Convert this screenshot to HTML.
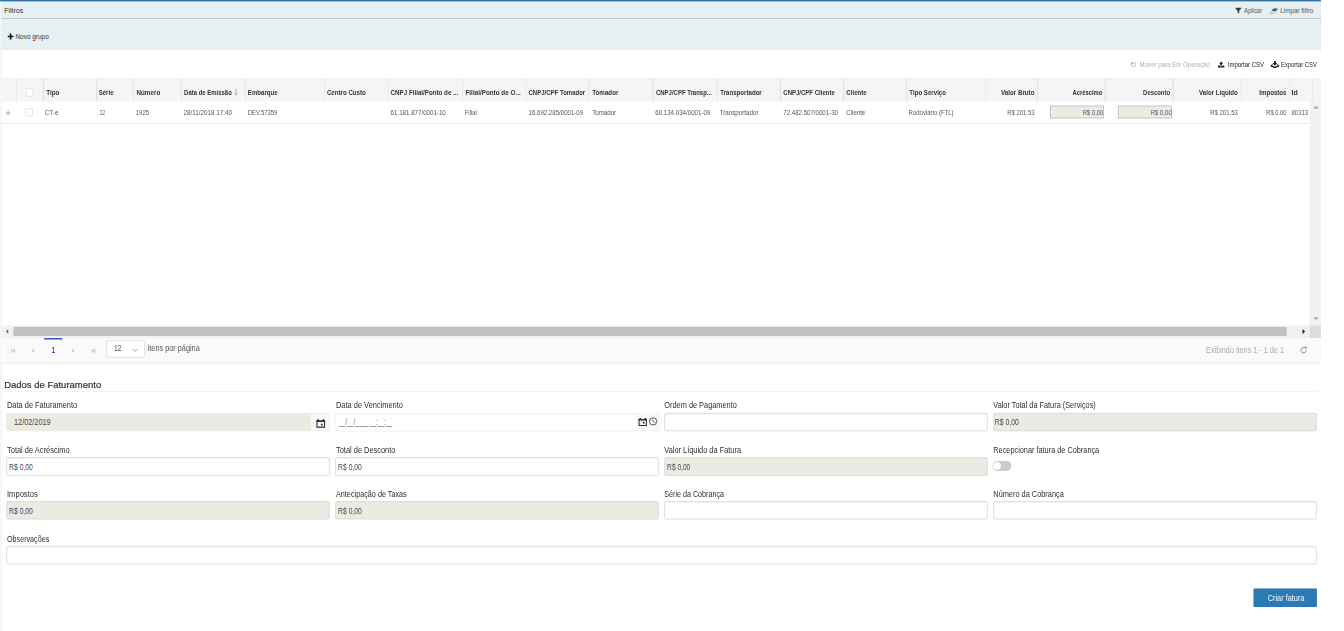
<!DOCTYPE html>
<html lang="pt-BR"><head><meta charset="utf-8"><title>Faturamento</title>
<style>
html,body{margin:0;padding:0;background:#fff;}
body{width:1344px;height:631px;position:relative;overflow:hidden;font-family:"Liberation Sans",Arial,sans-serif;font-size:11px;color:#333;}
#pg{position:absolute;left:0;top:0;width:1920px;height:902px;transform:scale(0.7);transform-origin:0 0;}
.t{position:absolute;white-space:nowrap;line-height:17.140px;height:17.140px;transform-origin:0 50%;}
.b{position:absolute;box-sizing:border-box;}
.in{border:1px solid #cfcfcf;border-radius:2px;background:#fff;box-shadow:inset 0 1px 1px rgba(0,0,0,.075);}
.dis{background:#ebebe4;border:1px solid #d1d1cb;border-radius:2.500px;}
svg{position:absolute;overflow:visible;}
</style></head><body><div id="pg">

<div class="b" style="left:0.00px;top:0.00px;width:6.00px;height:902.86px;background:linear-gradient(to right,#f1f1f1,#fbfbfb 35%,#fff);"></div>
<div class="b" style="left:2.14px;top:0.00px;width:1884.86px;height:70.86px;background:#e4f0f2;border-right:1.400px solid #dce9ec;border-bottom:1px solid #dfecef;"></div>
<div class="b" style="left:0.00px;top:0.00px;width:1887.00px;height:1.86px;background:#2f73a5;"></div>
<div class="b" style="left:2.14px;top:25.57px;width:1884.86px;height:1.43px;background:#a9b6bb;"></div>
<span class="t" style="left:6.29px;top:6.90px;font-size:11.00px;color:#333;transform:scaleX(0.9072);">Filtros</span>
<svg style="left:11.00px;top:47.86px" width="8.29" height="8.29" viewBox="0 0 10 10"><path d="M3.600 0h2.800v3.600H10v2.800H6.400V10H3.600V6.400H0V3.600h3.600z" fill="#111"/></svg>
<span class="t" style="left:22.29px;top:44.00px;font-size:10.71px;color:#333;transform:scaleX(0.8614);">Novo grupo</span>
<svg style="left:1765.29px;top:11.43px" width="8.29" height="8.43" viewBox="0 0 10 10"><path d="M0 0h10v1.200L6.400 5.200V10L3.600 8.300V5.200L0 1.200z" fill="#3a3a3a"/></svg>
<span class="t" style="left:1777.29px;top:6.86px;font-size:10.71px;color:#555;transform:scaleX(0.7987);">Aplicar</span>
<svg style="left:1814.00px;top:11.57px" width="11.71" height="7.86" viewBox="0 0 115 77"><path d="M50 0H115L90 38H25z" fill="#555"/><path d="M27 38H88L64 72H5z" fill="none" stroke="#888" stroke-width="7"/></svg>
<span class="t" style="left:1828.71px;top:6.86px;font-size:10.71px;color:#555;transform:scaleX(0.8421);">Limpar filtro</span>
<svg style="left:1615.14px;top:88.00px" width="8.29" height="7.29" viewBox="0 0 11 10"><path d="M1.500 3.500V9h7.500V1" fill="none" stroke="#b5b5b5" stroke-width="1.500"/><path d="M0.500 2.800L3 0.300v1.500h4v2H3v1.500z" fill="#999"/></svg>
<span class="t" style="left:1628.14px;top:83.86px;font-size:10.71px;color:#b0b0b0;transform:scaleX(0.8147);">Mover para Em Operação</span>
<svg style="left:1740.29px;top:87.57px" width="9.14" height="8.29" viewBox="0 0 12 11"><path d="M6 0L9.800 4.200H7.600V7.600H4.400V4.200H2.200z" fill="#1a1a1a"/><path d="M0 7.300h3.200l0.900 1.300h3.800l0.900-1.300H12V11H0z" fill="#1a1a1a"/></svg>
<span class="t" style="left:1754.29px;top:83.86px;font-size:10.71px;color:#222;transform:scaleX(0.7971);">Importar CSV</span>
<svg style="left:1814.57px;top:86.86px" width="12.57" height="10.71" viewBox="0 0 15 12.500"><path d="M6 0h3v3.500h2.600L7.500 8 3.400 3.500H6z" fill="#1a1a1a"/><path d="M0.300 7.200L3 5.400l1.300 1.200-1.700 1L7.500 10l4.900-2.400-1.700-1L12 5.400l2.700 1.800V9.200L7.500 12.500 0.300 9.200z" fill="#1a1a1a"/></svg>
<span class="t" style="left:1830.43px;top:83.72px;font-size:10.71px;color:#222;transform:scaleX(0.7828);">Exportar CSV</span>
<div class="b" style="left:2.14px;top:112.00px;width:1884.86px;height:32.71px;background:#f5f5f5;border-top:1px solid #ececec;"></div>
<div class="b" style="left:22.71px;top:112.00px;width:1.43px;height:32.71px;background:#e3e3e3;"></div>
<div class="b" style="left:61.14px;top:112.00px;width:1.43px;height:32.71px;background:#e3e3e3;"></div>
<div class="b" style="left:137.43px;top:112.00px;width:1.43px;height:32.71px;background:#e3e3e3;"></div>
<div class="b" style="left:189.57px;top:112.00px;width:1.43px;height:32.71px;background:#e3e3e3;"></div>
<div class="b" style="left:258.57px;top:112.00px;width:1.43px;height:32.71px;background:#e3e3e3;"></div>
<div class="b" style="left:349.86px;top:112.00px;width:1.43px;height:32.71px;background:#e3e3e3;"></div>
<div class="b" style="left:462.86px;top:112.00px;width:1.43px;height:32.71px;background:#e3e3e3;"></div>
<div class="b" style="left:553.86px;top:112.00px;width:1.43px;height:32.71px;background:#e3e3e3;"></div>
<div class="b" style="left:660.00px;top:112.00px;width:1.43px;height:32.71px;background:#e3e3e3;"></div>
<div class="b" style="left:751.00px;top:112.00px;width:1.43px;height:32.71px;background:#e3e3e3;"></div>
<div class="b" style="left:841.00px;top:112.00px;width:1.43px;height:32.71px;background:#e3e3e3;"></div>
<div class="b" style="left:932.43px;top:112.00px;width:1.43px;height:32.71px;background:#e3e3e3;"></div>
<div class="b" style="left:1023.57px;top:112.00px;width:1.43px;height:32.71px;background:#e3e3e3;"></div>
<div class="b" style="left:1114.29px;top:112.00px;width:1.43px;height:32.71px;background:#e3e3e3;"></div>
<div class="b" style="left:1204.29px;top:112.00px;width:1.43px;height:32.71px;background:#e3e3e3;"></div>
<div class="b" style="left:1294.29px;top:112.00px;width:1.43px;height:32.71px;background:#e3e3e3;"></div>
<div class="b" style="left:1407.86px;top:112.00px;width:1.43px;height:32.71px;background:#e3e3e3;"></div>
<div class="b" style="left:1481.43px;top:112.00px;width:1.43px;height:32.71px;background:#e3e3e3;"></div>
<div class="b" style="left:1578.43px;top:112.00px;width:1.43px;height:32.71px;background:#e3e3e3;"></div>
<div class="b" style="left:1675.43px;top:112.00px;width:1.43px;height:32.71px;background:#e3e3e3;"></div>
<div class="b" style="left:1772.86px;top:112.00px;width:1.43px;height:32.71px;background:#e3e3e3;"></div>
<div class="b" style="left:1841.86px;top:112.00px;width:1.43px;height:32.71px;background:#e3e3e3;"></div>
<div class="b" style="left:1873.86px;top:112.00px;width:1.43px;height:32.71px;background:#e3e3e3;"></div>
<span class="t" style="left:65.71px;top:123.86px;font-size:10.71px;color:#333;transform:scaleX(0.8453);font-weight:bold;">Tipo</span>
<span class="t" style="left:141.29px;top:123.86px;font-size:10.71px;color:#333;transform:scaleX(0.8098);font-weight:bold;">Série</span>
<span class="t" style="left:194.64px;top:123.86px;font-size:10.71px;color:#333;transform:scaleX(0.8377);font-weight:bold;">Número</span>
<span class="t" style="left:262.50px;top:123.86px;font-size:10.71px;color:#333;transform:scaleX(0.7953);font-weight:bold;">Data de Emissão</span>
<span class="t" style="left:354.29px;top:123.86px;font-size:10.71px;color:#333;transform:scaleX(0.8180);font-weight:bold;">Embarque</span>
<span class="t" style="left:467.14px;top:123.86px;font-size:10.71px;color:#333;transform:scaleX(0.8208);font-weight:bold;">Centro Custo</span>
<span class="t" style="left:558.21px;top:123.86px;font-size:10.71px;color:#333;transform:scaleX(0.8295);font-weight:bold;">CNPJ Filial/Ponto de ...</span>
<span class="t" style="left:664.64px;top:123.86px;font-size:10.71px;color:#333;transform:scaleX(0.8443);font-weight:bold;">Filial/Ponto de O...</span>
<span class="t" style="left:755.36px;top:123.86px;font-size:10.71px;color:#333;transform:scaleX(0.8028);font-weight:bold;">CNPJ/CPF Tomador</span>
<span class="t" style="left:846.07px;top:123.86px;font-size:10.71px;color:#333;transform:scaleX(0.8323);font-weight:bold;">Tomador</span>
<span class="t" style="left:937.14px;top:123.86px;font-size:10.71px;color:#333;transform:scaleX(0.7999);font-weight:bold;">CNPJ/CPF Transp...</span>
<span class="t" style="left:1028.57px;top:123.86px;font-size:10.71px;color:#333;transform:scaleX(0.8161);font-weight:bold;">Transportador</span>
<span class="t" style="left:1119.29px;top:123.86px;font-size:10.71px;color:#333;transform:scaleX(0.8026);font-weight:bold;">CNPJ/CPF Cliente</span>
<span class="t" style="left:1209.29px;top:123.86px;font-size:10.71px;color:#333;transform:scaleX(0.8196);font-weight:bold;">Cliente</span>
<span class="t" style="left:1299.29px;top:123.86px;font-size:10.71px;color:#333;transform:scaleX(0.8187);font-weight:bold;">Tipo Serviço</span>
<span class="t" style="left:1429.71px;top:123.86px;font-size:10.71px;color:#333;transform:scaleX(0.8287);font-weight:bold;">Valor Bruto</span>
<span class="t" style="left:1531.71px;top:123.86px;font-size:10.71px;color:#333;transform:scaleX(0.7820);font-weight:bold;">Acréscimo</span>
<span class="t" style="left:1632.86px;top:123.86px;font-size:10.71px;color:#333;transform:scaleX(0.7903);font-weight:bold;">Desconto</span>
<span class="t" style="left:1713.21px;top:123.86px;font-size:10.71px;color:#333;transform:scaleX(0.8156);font-weight:bold;">Valor Líquido</span>
<span class="t" style="left:1798.57px;top:123.86px;font-size:10.71px;color:#333;transform:scaleX(0.8174);font-weight:bold;">Impostos</span>
<span class="t" style="left:1845.36px;top:123.86px;font-size:10.71px;color:#333;transform:scaleX(0.9363);font-weight:bold;">Id</span>
<svg style="left:335.00px;top:126.86px" width="4.29" height="9.29" viewBox="0 0 6 13"><path d="M3 0v12M0.500 9.500L3 12l2.500-2.500" fill="none" stroke="#888" stroke-width="1.300"/></svg>
<div class="b" style="left:37.29px;top:126.00px;width:10.93px;height:11.86px;background:#fff;border:1px solid #d8d8d8;border-radius:2px;"></div>
<div class="b" style="left:2.14px;top:175.86px;width:1869.29px;height:1.14px;background:#e2e2e2;"></div>
<div class="b" style="left:1871.43px;top:144.71px;width:15.57px;height:321.43px;background:#f1f1f1;"></div>
<svg style="left:1875.71px;top:150.71px" width="8.00" height="4.29" viewBox="0 0 10 5"><path d="M0 5L5 0l5 5z" fill="#a5a5a5"/></svg>
<svg style="left:1875.71px;top:453.29px" width="8.00" height="4.29" viewBox="0 0 10 5"><path d="M0 0L5 5l5-5z" fill="#a5a5a5"/></svg>
<svg style="left:8.00px;top:157.57px" width="7.14" height="7.14" viewBox="0 0 10 10"><path d="M4 0h2v4h4v2H6v4H4V6H0V4h4z" fill="#aaa"/></svg>
<div class="b" style="left:36.07px;top:154.86px;width:10.71px;height:11.57px;background:#fff;border:1px solid #d8d8d8;border-radius:2px;"></div>
<span class="t" style="left:64.29px;top:152.01px;font-size:9.86px;color:#555;transform:scaleX(0.9104);">CT-e</span>
<span class="t" style="left:141.79px;top:152.01px;font-size:9.86px;color:#555;transform:scaleX(0.7508);">12</span>
<span class="t" style="left:194.29px;top:152.01px;font-size:9.86px;color:#555;transform:scaleX(0.8631);">1925</span>
<span class="t" style="left:261.79px;top:152.01px;font-size:9.86px;color:#555;transform:scaleX(0.9164);">28/11/2018 17:40</span>
<span class="t" style="left:353.93px;top:152.01px;font-size:9.86px;color:#555;transform:scaleX(0.8508);">DEV.57359</span>
<span class="t" style="left:557.50px;top:152.01px;font-size:9.86px;color:#555;transform:scaleX(0.8942);">61.181.877/0001-10</span>
<span class="t" style="left:663.93px;top:152.01px;font-size:9.86px;color:#555;transform:scaleX(0.8463);">Filial</span>
<span class="t" style="left:755.36px;top:152.01px;font-size:9.86px;color:#555;transform:scaleX(0.8861);">16.692.285/0001-09</span>
<span class="t" style="left:845.71px;top:152.01px;font-size:9.86px;color:#555;transform:scaleX(0.8942);">Tomador</span>
<span class="t" style="left:936.43px;top:152.01px;font-size:9.86px;color:#555;transform:scaleX(0.8942);">60.134.034/0001-09</span>
<span class="t" style="left:1027.50px;top:152.01px;font-size:9.86px;color:#555;transform:scaleX(0.9051);">Transportador</span>
<span class="t" style="left:1118.57px;top:152.01px;font-size:9.86px;color:#555;transform:scaleX(0.8861);">72.482.507/0001-30</span>
<span class="t" style="left:1208.57px;top:152.01px;font-size:9.86px;color:#555;transform:scaleX(0.8840);">Cliente</span>
<span class="t" style="left:1298.21px;top:152.01px;font-size:9.86px;color:#555;transform:scaleX(0.8696);">Rodoviário (FTL)</span>
<span class="t" style="left:1438.86px;top:152.01px;font-size:9.86px;color:#555;transform:scaleX(0.8573);">R$ 201.53</span>
<span class="t" style="left:1729.29px;top:152.01px;font-size:9.86px;color:#555;transform:scaleX(0.8636);">R$ 201.53</span>
<span class="t" style="left:1808.93px;top:152.01px;font-size:9.86px;color:#555;transform:scaleX(0.8373);">R$ 0.00</span>
<span class="t" style="left:1845.29px;top:152.01px;font-size:9.86px;color:#555;transform:scaleX(0.8654);">80313</span>
<div class="b" style="left:1499.86px;top:150.57px;width:77.14px;height:18.29px;background:#ebebe4;border:1.400px solid #b2b2ae;box-shadow:inset 0 0 0 1.300px #f6f6f1;"></div>
<div class="b" style="left:1596.71px;top:150.57px;width:77.29px;height:18.29px;background:#ebebe4;border:1.400px solid #b2b2ae;box-shadow:inset 0 0 0 1.300px #f6f6f1;"></div>
<span class="t" style="left:1546.71px;top:152.01px;font-size:9.86px;color:#555;transform:scaleX(0.8477);">R$ 0,00</span>
<span class="t" style="left:1643.57px;top:152.01px;font-size:9.86px;color:#555;transform:scaleX(0.8683);">R$ 0,00</span>
<div class="b" style="left:2.14px;top:465.00px;width:1884.86px;height:18.00px;background:#f1f1f1;"></div>
<div class="b" style="left:19.00px;top:466.86px;width:1818.57px;height:12.86px;background:#c1c1c1;"></div>
<div class="b" style="left:1871.43px;top:465.00px;width:15.57px;height:18.00px;background:#dcdcdc;"></div>
<svg style="left:8.14px;top:470.00px" width="4.29" height="6.71" viewBox="0 0 5 10"><path d="M5 0L0 5l5 5z" fill="#6a6a6a"/></svg>
<svg style="left:1860.00px;top:469.57px" width="5.14" height="7.43" viewBox="0 0 5 10"><path d="M0 0l5 5-5 5z" fill="#222"/></svg>
<div class="b" style="left:2.14px;top:483.00px;width:1884.86px;height:36.29px;background:#fafafa;border-bottom:1px solid #e2e2e2;"></div>
<div class="b" style="left:63.14px;top:482.57px;width:26.14px;height:2.14px;background:#3343b5;"></div>
<span class="t" style="left:74.00px;top:491.91px;font-size:12.00px;color:#3f51b5;transform:scaleX(0.7293);font-weight:bold;">1</span>
<svg style="left:16.07px;top:497.71px" width="5.43" height="6.43" viewBox="0 0 8 10"><path d="M0 0h2v10H0zM8 0L2.500 5 8 10z" fill="#c8c8c8"/></svg>
<svg style="left:45.29px;top:497.71px" width="3.86" height="6.43" viewBox="0 0 5.500 10"><path d="M5.500 0L0 5l5.500 5z" fill="#c8c8c8"/></svg>
<svg style="left:103.29px;top:497.71px" width="3.86" height="6.43" viewBox="0 0 5.500 10"><path d="M0 0l5.500 5L0 10z" fill="#c8c8c8"/></svg>
<svg style="left:131.00px;top:497.71px" width="5.43" height="6.43" viewBox="0 0 8 10"><path d="M6 0H8v10H6zM0 0l5.500 5L0 10z" fill="#c8c8c8"/></svg>
<div class="b" style="left:152.00px;top:486.00px;width:54.71px;height:24.86px;background:#fff;border:1px solid #d4d4d4;border-radius:3px;"></div>
<span class="t" style="left:162.50px;top:489.16px;font-size:11.71px;color:#555;transform:scaleX(0.8240);">12</span>
<svg style="left:188.57px;top:497.71px" width="8.00" height="4.43" viewBox="0 0 10 5.500"><path d="M0.500 0.500L5 5l4.500-4.500" fill="none" stroke="#999" stroke-width="1.600"/></svg>
<span class="t" style="left:211.29px;top:489.16px;font-size:11.71px;color:#555;transform:scaleX(0.8924);">itens por página</span>
<span class="t" style="left:1723.29px;top:492.37px;font-size:11.71px;color:#aaa;transform:scaleX(0.8854);">Exibindo itens 1 - 1 de 1</span>
<svg style="left:1857.14px;top:495.43px" width="10.71" height="10.71" viewBox="0 0 12 12"><path d="M10.200 6A4.300 4.300 0 1 1 8.800 2.800" fill="none" stroke="#777" stroke-width="1.300"/><path d="M7.200 0.300h3.600v3.600z" fill="#777"/></svg>
<span class="t" style="left:6.43px;top:540.86px;font-size:14.00px;color:#333;transform:scaleX(0.9675);-webkit-text-stroke:0.3px #333;">Dados de Faturamento</span>
<div class="b" style="left:5.71px;top:558.86px;width:1875.00px;height:1.43px;background:#eee;"></div>
<span class="t" style="left:9.64px;top:569.87px;font-size:11.71px;color:#2e2e2e;transform:scaleX(0.9066);">Data de Faturamento</span>
<span class="t" style="left:479.57px;top:569.87px;font-size:11.71px;color:#2e2e2e;transform:scaleX(0.9074);">Data de Vencimento</span>
<span class="t" style="left:949.14px;top:569.87px;font-size:11.71px;color:#2e2e2e;transform:scaleX(0.8998);">Ordem de Pagamento</span>
<span class="t" style="left:1418.71px;top:569.87px;font-size:11.71px;color:#2e2e2e;transform:scaleX(0.8956);">Valor Total da Fatura (Serviços)</span>
<span class="t" style="left:9.64px;top:634.23px;font-size:11.71px;color:#2e2e2e;transform:scaleX(0.9115);">Total de Acréscimo</span>
<span class="t" style="left:479.57px;top:634.23px;font-size:11.71px;color:#2e2e2e;transform:scaleX(0.9064);">Total de Desconto</span>
<span class="t" style="left:949.14px;top:634.23px;font-size:11.71px;color:#2e2e2e;transform:scaleX(0.9023);">Valor Líquido da Fatura</span>
<span class="t" style="left:1418.71px;top:634.23px;font-size:11.71px;color:#2e2e2e;transform:scaleX(0.8943);">Recepcionar fatura de Cobrança</span>
<span class="t" style="left:9.64px;top:697.08px;font-size:11.71px;color:#2e2e2e;transform:scaleX(0.9248);">Impostos</span>
<span class="t" style="left:479.57px;top:697.08px;font-size:11.71px;color:#2e2e2e;transform:scaleX(0.8842);">Antecipação de Taxas</span>
<span class="t" style="left:949.14px;top:697.08px;font-size:11.71px;color:#2e2e2e;transform:scaleX(0.8739);">Série da Cobrança</span>
<span class="t" style="left:1418.71px;top:697.08px;font-size:11.71px;color:#2e2e2e;transform:scaleX(0.9001);">Número da Cobrança</span>
<span class="t" style="left:9.64px;top:760.80px;font-size:11.71px;color:#2e2e2e;transform:scaleX(0.8748);">Observações</span>
<div class="b dis" style="left:8.57px;top:590.00px;width:462.14px;height:26.29px;border-color:#ebebe4;"></div>
<div class="b" style="left:443.71px;top:589.57px;width:28.43px;height:26.71px;background:#f8f8f8;border-radius:0 3px 3px 0;border:1px solid #ececec;border-left:none;"></div>
<span class="t" style="left:20.43px;top:593.94px;font-size:11.71px;color:#484848;transform:scaleX(0.8942);">12/02/2019</span>
<div class="b in" style="left:478.57px;top:589.57px;width:463.86px;height:26.71px;border-color:#e9e9e9;"></div>
<div class="b" style="left:909.43px;top:590.43px;width:32.29px;height:25.14px;background:#f8f8f8;"></div>
<span class="t" style="left:483.74px;top:594.37px;font-size:11.71px;color:#666;transform:scaleX(0.7124);">__/__/____ __:__:__</span>
<div class="b in" style="left:948.57px;top:590.00px;width:462.14px;height:26.29px;"></div>
<div class="b dis" style="left:1418.57px;top:590.00px;width:462.14px;height:26.29px;"></div>
<span class="t" style="left:1421.29px;top:593.94px;font-size:11.71px;color:#484848;transform:scaleX(0.8420);">R$ 0,00</span>
<svg style="left:451.86px;top:599.43px" width="12.43" height="12.00" viewBox="0 0 14 13.500"><path d="M0.900 2.600h12.200v10H0.900z" fill="none" stroke="#2b2b2b" stroke-width="1.700"/><path d="M0 1.800h14v2.600H0z M1.300 0h2.700v2.500H1.300z M10 0h2.700v2.500H10z" fill="#2b2b2b"/><circle cx="8.700" cy="8.200" r="1.600" fill="#2b2b2b"/></svg>
<svg style="left:911.79px;top:596.71px" width="12.36" height="11.57" viewBox="0 0 14 13.500"><path d="M0.900 2.600h12.200v10H0.900z" fill="none" stroke="#2b2b2b" stroke-width="1.700"/><path d="M0 1.800h14v2.600H0z M1.300 0h2.700v2.500H1.300z M10 0h2.700v2.500H10z" fill="#2b2b2b"/><circle cx="8.700" cy="8.200" r="1.600" fill="#2b2b2b"/></svg>
<svg style="left:926.79px;top:596.29px" width="12.07" height="12.00" viewBox="0 0 14 14"><circle cx="7" cy="7" r="6" fill="none" stroke="#444" stroke-width="1.500"/><path d="M5.600 3.800L7 7.300L10.400 8.700" fill="none" stroke="#555" stroke-width="1.300"/></svg>
<div class="b in" style="left:8.57px;top:653.29px;width:462.14px;height:26.29px;"></div>
<span class="t" style="left:12.86px;top:658.08px;font-size:11.71px;color:#484848;transform:scaleX(0.8263);">R$ 0,00</span>
<div class="b in" style="left:478.57px;top:653.29px;width:462.14px;height:26.29px;"></div>
<span class="t" style="left:482.57px;top:658.08px;font-size:11.71px;color:#484848;transform:scaleX(0.8281);">R$ 0,00</span>
<div class="b dis" style="left:948.57px;top:653.29px;width:462.14px;height:26.29px;"></div>
<span class="t" style="left:952.57px;top:658.08px;font-size:11.71px;color:#484848;transform:scaleX(0.8072);">R$ 0,00</span>
<div class="b" style="left:1417.71px;top:658.43px;width:26.86px;height:14.29px;background:#ccc;border-radius:8px;"></div>
<div class="b" style="left:1419.43px;top:660.14px;width:10.86px;height:10.86px;background:#fff;border-radius:6px;"></div>
<div class="b dis" style="left:8.57px;top:716.14px;width:462.14px;height:26.29px;"></div>
<span class="t" style="left:12.86px;top:720.94px;font-size:11.71px;color:#484848;transform:scaleX(0.8263);">R$ 0,00</span>
<div class="b dis" style="left:478.57px;top:716.14px;width:462.14px;height:26.29px;"></div>
<span class="t" style="left:482.57px;top:720.94px;font-size:11.71px;color:#484848;transform:scaleX(0.8281);">R$ 0,00</span>
<div class="b in" style="left:948.57px;top:716.14px;width:462.14px;height:26.29px;"></div>
<div class="b in" style="left:1418.57px;top:716.14px;width:462.14px;height:26.29px;"></div>
<div class="b in" style="left:8.57px;top:780.00px;width:1872.14px;height:26.29px;"></div>
<div class="b" style="left:1790.86px;top:841.29px;width:89.86px;height:25.71px;background:#2a7bb5;border:1px solid #2872aa;"></div>
<span class="t" style="left:1811.43px;top:845.94px;font-size:11.71px;color:#fff;transform:scaleX(0.8954);">Criar fatura</span>
</div></body></html>
